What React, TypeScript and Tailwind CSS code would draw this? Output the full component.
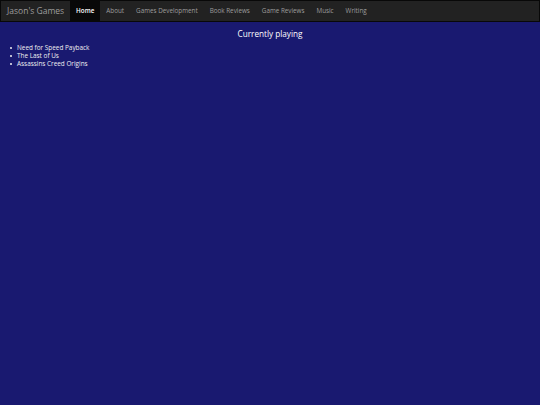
const NAV = ["Home", "About", "Games Development", "Book Reviews", "Game Reviews", "Music", "Writing"];

const PLAYING = ["Need for Speed Payback", "The Last of Us", "Assassins Creed Origins"];

export default function App() {
  return (
    <div
      className="min-h-[405px] bg-[#191970] text-[#f0f0f0]"
      style={{ fontFamily: '"Open Sans", "DejaVu Sans", sans-serif' }}
    >
      <nav className="flex h-[22px] items-stretch border border-[#080808] bg-[#222222]">
        <a className="flex items-center pl-[6px] pr-[6px] text-[8.5px] text-[#9d9d9d]">Jason's Games</a>
        <ul className="flex items-stretch">
          {NAV.map((n, i) => (
            <li
              key={n}
              className={
                i === 0
                  ? "flex items-center bg-[#080808] px-[6px] text-[6.3px] font-semibold text-white"
                  : "flex items-center px-[6px] text-[6.3px] text-[#9d9d9d]"
              }
            >
              {n}
            </li>
          ))}
        </ul>
      </nav>
      <h3 className="mt-[6px] text-center text-[8.2px] leading-[11px] text-white">Currently playing</h3>
      <ul className="mt-[5px] pl-[10px] text-[6.4px] leading-[8px]">
        {PLAYING.map((p) => (
          <li key={p} className="flex items-center gap-[5px]">
            <span className="h-[2px] w-[2px] rounded-full bg-[#f0f0f0]" />
            {p}
          </li>
        ))}
      </ul>
    </div>
  );
}
